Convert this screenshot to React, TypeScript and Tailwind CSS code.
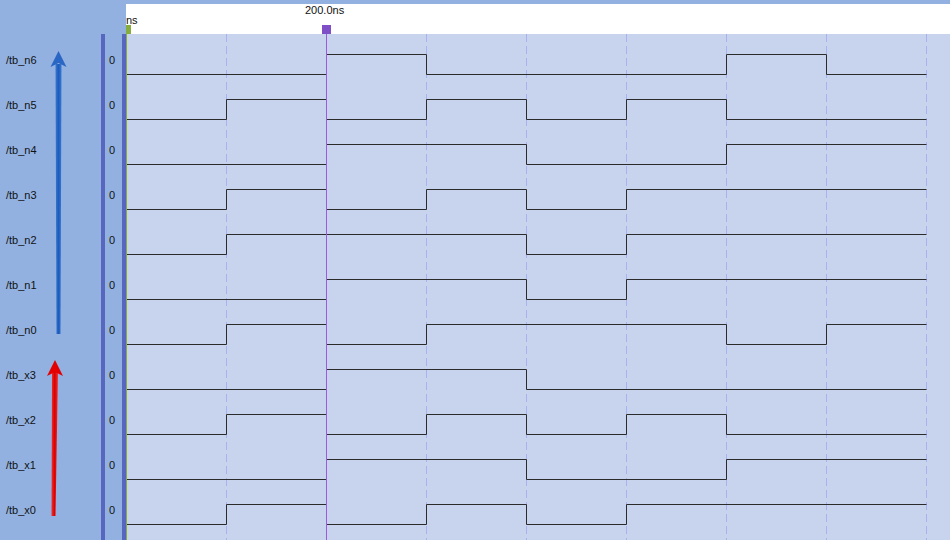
import React from "react";

const signals: { name: string; bits: number[] }[] = [
  { name: "/tb_n6", bits: [0, 0, 1, 0, 0, 0, 1, 0] },
  { name: "/tb_n5", bits: [0, 1, 0, 1, 0, 1, 0, 0] },
  { name: "/tb_n4", bits: [0, 0, 1, 1, 0, 0, 1, 1] },
  { name: "/tb_n3", bits: [0, 1, 0, 1, 0, 1, 1, 1] },
  { name: "/tb_n2", bits: [0, 1, 1, 1, 0, 1, 1, 1] },
  { name: "/tb_n1", bits: [0, 0, 1, 1, 0, 1, 1, 1] },
  { name: "/tb_n0", bits: [0, 1, 0, 1, 1, 1, 0, 1] },
  { name: "/tb_x3", bits: [0, 0, 1, 1, 0, 0, 0, 0] },
  { name: "/tb_x2", bits: [0, 1, 0, 1, 0, 1, 0, 0] },
  { name: "/tb_x1", bits: [0, 0, 1, 1, 0, 0, 1, 1] },
  { name: "/tb_x0", bits: [0, 1, 0, 1, 0, 1, 1, 1] },
];

const font = { fontFamily: '"Liberation Sans", Arial, sans-serif' };

function wavePath(bits: number[], row: number) {
  const hi = 54.5 + row * 45;
  const lo = 74.5 + row * 45;
  let d = "";
  let prev = -1;
  bits.forEach((b, i) => {
    const x = 126 + i * 100 + (i === 0 ? 1 : 0.5);
    const y = b ? hi : lo;
    if (i === 0) d += `M${x} ${y}`;
    else if (b !== prev) d += ` L${x} ${prev ? hi : lo} L${x} ${y}`;
    prev = b;
  });
  d += ` L926.5 ${prev ? hi : lo}`;
  return d;
}

function Waves() {
  const grid = [226, 426, 526, 626, 726, 826, 926];
  return (
    <svg width={823} height={506} viewBox="127 34 823 506" className="block">
      <rect x={127} y={34} width={823} height={506} fill="#c8d3ee" />
      {grid.map((x) => (
        <line key={x} x1={x + 0.5} y1={34} x2={x + 0.5} y2={540} stroke="#a7b3f0" strokeWidth={1} strokeDasharray="8 4" />
      ))}
      {signals.map((s, i) => (
        <path key={s.name} d={wavePath(s.bits, i)} fill="none" stroke="#2b2b2b" strokeWidth={1} />
      ))}
      <line x1={326.5} y1={34} x2={326.5} y2={540} stroke="#9b5ae0" strokeWidth={1} />
    </svg>
  );
}

function Arrows() {
  return (
    <svg width={126} height={540} className="pointer-events-none absolute left-0 top-0">
      <defs>
        <linearGradient id="blueShaft" x1="0" x2="1" y1="0" y2="0">
          <stop offset="0" stopColor="#3a78d0" />
          <stop offset="0.5" stopColor="#1c5cbc" />
          <stop offset="1" stopColor="#3a78d0" />
        </linearGradient>
        <linearGradient id="redShaft" x1="0" x2="1" y1="0" y2="0">
          <stop offset="0" stopColor="#f03030" />
          <stop offset="0.5" stopColor="#d80000" />
          <stop offset="1" stopColor="#f03030" />
        </linearGradient>
      </defs>
      <polygon points="55.5,64 61.5,64 60.5,334 56.5,334" fill="url(#blueShaft)" />
      <polygon points="58.5,51 66.5,67 58.5,63 50.5,67" fill="#2a66c4" />
      <polygon points="52,372 58,372 55.5,516 51.5,516" fill="url(#redShaft)" />
      <polygon points="55,360 63,376 55,372 47,376" fill="#e40000" />
    </svg>
  );
}

export default function App() {
  return (
    <div className="relative flex h-[540px] w-[950px] flex-col overflow-hidden bg-[#92b1e1] text-[11px] text-[#111111]" style={font}>
      <div className="flex h-[34px] pt-[4px]">
        <div className="w-[126px]" />
        <div className="relative flex-1 bg-white">
          <span className="absolute left-0 top-[11px] leading-[11px]">ns</span>
          <span className="absolute left-[179px] top-[1px] leading-[11px]">200.0ns</span>
          <div className="absolute bottom-0 left-0 h-[9px] w-[5px] bg-[#84ad3e]" />
          <div className="absolute bottom-0 left-[196px] h-[9px] w-[9px] bg-[#7f4fc8]" />
        </div>
      </div>
      <div className="flex flex-1">
        <div className="w-[101px] pl-[6px] pt-[4px]">
          {signals.map((s) => (
            <div key={s.name} className="flex h-[45px] items-center leading-[13px]">
              {s.name}
            </div>
          ))}
        </div>
        <div className="w-[4px] bg-[#5766be]" />
        <div className="w-[17px] pl-[4px] pt-[4px]">
          {signals.map((s) => (
            <div key={s.name} className="flex h-[45px] items-center leading-[13px]">
              0
            </div>
          ))}
        </div>
        <div className="w-[4px] bg-[#5766be]" />
        <div className="w-[1px] bg-[#84ad3e]" />
        <Waves />
      </div>
      <Arrows />
    </div>
  );
}
